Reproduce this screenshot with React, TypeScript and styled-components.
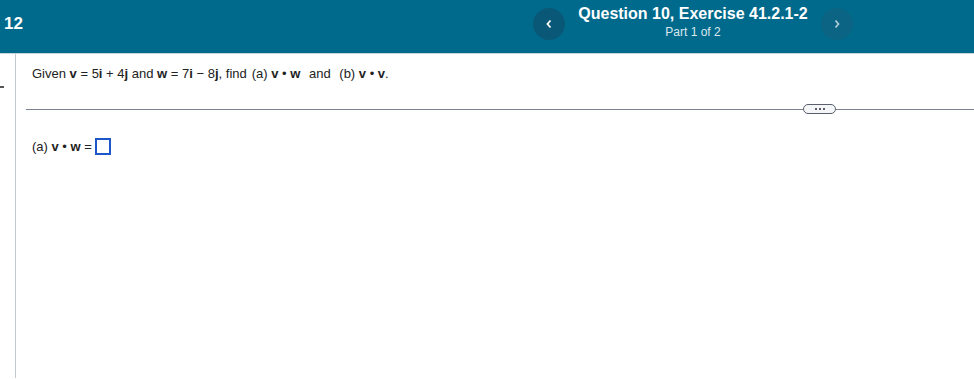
import React from "react";
import styled, { createGlobalStyle } from "styled-components";

const Global = createGlobalStyle`
  html, body { margin: 0; padding: 0; background: #fff; }
  body { font-family: "Liberation Sans", Arial, sans-serif; }
  * { box-sizing: border-box; }
`;

const Page = styled.div`
  width: 974px;
  height: 379px;
  display: flex;
  flex-direction: column;
  overflow: hidden;
`;

const Header = styled.header`
  height: 54px;
  flex: none;
  background: #006a8c;
  border-bottom: 1px solid #c9d3dc;
  display: grid;
  grid-template-columns: 531px 36px 252px 36px 1fr;
  align-items: center;
  color: #fff;
`;

const Num = styled.div`
  font-weight: bold;
  font-size: 17px;
  padding-left: 4px;
  padding-bottom: 6px;
`;

const NavBtn = styled.button<{ $dim?: boolean }>`
  width: 32px;
  height: 32px;
  border-radius: 50%;
  border: none;
  padding: 0;
  margin-left: 2px;
  margin-bottom: 6px;
  background: ${(p) => (p.$dim ? "#0b6483" : "#0a5878")};
  color: ${(p) => (p.$dim ? "#a9cbd8" : "#fff")};
  display: flex;
  align-items: center;
  justify-content: center;
`;

const TitleBlock = styled.div`
  display: flex;
  flex-direction: column;
  align-items: center;
  padding-bottom: 8px;
  white-space: nowrap;
`;

const Title = styled.div`
  font-weight: bold;
  font-size: 16px;
  line-height: 18px;
`;

const Sub = styled.div`
  font-size: 12px;
  line-height: 16px;
  color: #dbe8ee;
  margin-top: 1px;
`;

const Body = styled.div`
  flex: 1;
  display: grid;
  grid-template-columns: 15px 1px 1fr;
`;

const Gutter = styled.div`
  position: relative;
`;

const Dash = styled.div`
  position: absolute;
  left: 0;
  top: 32px;
  width: 4px;
  height: 2px;
  background: #555;
`;

const VLine = styled.div`
  background: #c3cad4;
  margin-bottom: 1px;
`;

const Content = styled.div`
  display: flex;
  flex-direction: column;
  font-size: 13px;
  color: #222;
`;

const Question = styled.div`
  padding: 12px 0 0 16px;
  height: 49px;
  line-height: 16px;
  white-space: nowrap;
`;

const DividerRow = styled.div`
  display: flex;
  align-items: center;
  margin-left: 10px;
  height: 12px;
`;

const Rule = styled.div<{ $w?: number }>`
  height: 1px;
  background: #7b8290;
  ${(p) => (p.$w ? `width: ${p.$w}px;` : "flex: 1;")}
`;

const Pill = styled.div`
  width: 33px;
  height: 10px;
  border: 1px solid #59606c;
  border-radius: 5px;
  display: flex;
  align-items: center;
  justify-content: center;
  gap: 2px;
  background: #f4f6f8;
`;

const Dot = styled.span`
  width: 2px;
  height: 2px;
  background: #59606c;
`;

const Answer = styled.div`
  display: flex;
  align-items: center;
  padding: 23px 0 0 16px;
  line-height: 16px;
  white-space: pre;
`;

const Box = styled.span`
  display: inline-block;
  width: 16px;
  height: 17px;
  border: 2px solid #1d56c9;
  margin-left: 3px;
`;

const Sp = styled.span`
  display: inline-block;
  width: 5px;
`;

export default function App() {
  return (
    <Page>
      <Global />
      <Header>
        <Num>12</Num>
        <NavBtn aria-label="previous">
          <svg width="8" height="10" viewBox="0 0 8 10">
            <path d="M5.5 1.5 L2.5 5 L5.5 8.5" stroke="currentColor" strokeWidth="1.8" fill="none" />
          </svg>
        </NavBtn>
        <TitleBlock>
          <Title>Question 10, Exercise 41.2.1-2</Title>
          <Sub>Part 1 of 2</Sub>
        </TitleBlock>
        <NavBtn $dim aria-label="next">
          <svg width="8" height="10" viewBox="0 0 8 10">
            <path d="M2.5 1.5 L5.5 5 L2.5 8.5" stroke="currentColor" strokeWidth="1.8" fill="none" />
          </svg>
        </NavBtn>
        <div />
      </Header>
      <Body>
        <Gutter>
          <Dash />
        </Gutter>
        <VLine />
        <Content>
          <Question>
            Given <b>v</b> = 5<b>i</b> + 4<b>j</b> and <b>w</b> = 7<b>i</b> − 8<b>j</b>, find
            <Sp />(a) <b>v</b> • <b>w</b>
            <Sp /> and <Sp />(b) <b>v</b> • <b>v</b>.
          </Question>
          <DividerRow>
            <Rule $w={777} />
            <Pill>
              <Dot />
              <Dot />
              <Dot />
            </Pill>
            <Rule />
          </DividerRow>
          <Answer>
            (a) <b>v</b> • <b>w</b> =<Box />
          </Answer>
        </Content>
      </Body>
    </Page>
  );
}
